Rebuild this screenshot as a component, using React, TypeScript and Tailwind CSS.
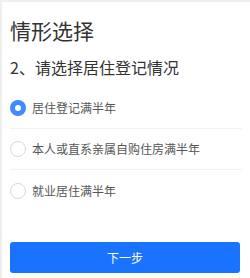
import React, { useState } from "react";

const options = ["居住登记满半年", "本人或直系亲属自购住房满半年", "就业居住满半年"];

export default function App() {
  const [selected, setSelected] = useState(0);

  return (
    <div
      className="w-[250px] h-[278px] bg-[#efefef] pt-[2px] pl-[2px]"
      style={{ fontFamily: '"Noto Sans CJK SC", "Noto Sans", sans-serif' }}
    >
      <div className="h-full bg-white px-[8px] pt-[14px]">
        <h1 className="text-[21px] leading-[28px] text-[#333]">情形选择</h1>
        <h2 className="mt-[12px] text-[16px] leading-[22px] text-[#333]">2、请选择居住登记情况</h2>

        {/* 选项 */}
        <div className="mt-[10px]">
          {options.map((opt, i) => (
            <div
              key={opt}
              onClick={() => setSelected(i)}
              className={
                "flex items-center gap-[6px] h-[41px] " +
                (i < options.length - 1 ? "border-b border-[#f2f2f2]" : "")
              }
            >
              {selected === i ? (
                <span className="w-[16px] h-[16px] rounded-full bg-[#3d8bfd] flex items-center justify-center">
                  <span className="w-[6px] h-[6px] rounded-full bg-white" />
                </span>
              ) : (
                <span className="w-[16px] h-[16px] rounded-full border border-[#d9d9d9]" />
              )}
              <span className="text-[12px] text-[#555]">{opt}</span>
            </div>
          ))}
        </div>

        <button className="mt-[31px] w-[230px] h-[31px] rounded-[3px] bg-[#1a73ff] text-white text-[12px]">
          下一步
        </button>
      </div>
    </div>
  );
}
